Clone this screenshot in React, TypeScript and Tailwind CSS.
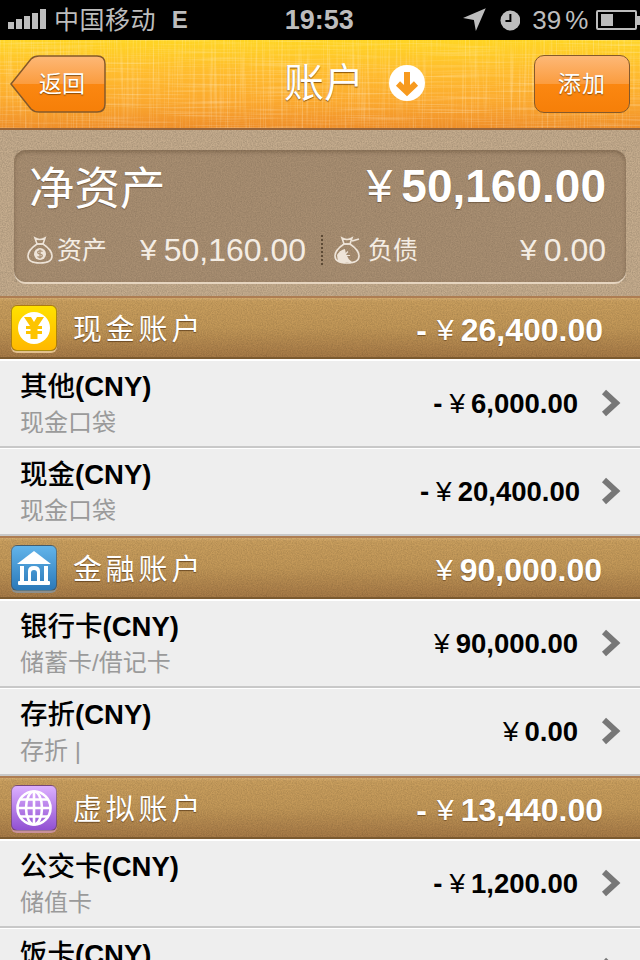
import React from "react";

function Grain({ id, opacity = 0.18 }: { id: string; opacity?: number }) {
  return (
    <svg className="absolute inset-0 h-full w-full pointer-events-none" style={{ opacity }} aria-hidden="true">
      <filter id={id} x="0" y="0" width="100%" height="100%">
        <feTurbulence type="fractalNoise" baseFrequency="0.8" numOctaves={2} seed={4} />
        <feColorMatrix type="matrix" values="0 0 0 0 0  0 0 0 0 0  0 0 0 0 0  1.6 0 0 0 -0.45" />
      </filter>
      <rect width="100%" height="100%" filter={`url(#${id})`} />
    </svg>
  );
}

function Linen() {
  return (
    <svg className="absolute inset-0 h-full w-full pointer-events-none" aria-hidden="true">
      <filter id="linenH" x="0" y="0" width="100%" height="100%">
        <feTurbulence type="fractalNoise" baseFrequency="0.012 0.55" numOctaves={2} seed={7} />
        <feColorMatrix type="matrix" values="0 0 0 0 1  0 0 0 0 0.95  0 0 0 0 0.8  2.6 0 0 0 -1.25" />
      </filter>
      <filter id="linenV" x="0" y="0" width="100%" height="100%">
        <feTurbulence type="fractalNoise" baseFrequency="0.55 0.012" numOctaves={2} seed={11} />
        <feColorMatrix type="matrix" values="0 0 0 0 1  0 0 0 0 0.95  0 0 0 0 0.8  2.6 0 0 0 -1.25" />
      </filter>
      <rect width="100%" height="100%" filter="url(#linenH)" opacity="0.28" />
      <rect width="100%" height="100%" filter="url(#linenV)" opacity="0.28" />
    </svg>
  );
}

function StatusBar() {
  return (
    <div className="flex h-10 items-center bg-black text-[#bdbdbd]">
      <div className="ml-2 flex h-[20px] w-[38px] items-end gap-[2px] pb-[1px]">
        <i className="block h-[7px] w-[6px] bg-[#bdbdbd]" />
        <i className="block h-[10px] w-[6px] bg-[#bdbdbd]" />
        <i className="block h-[13px] w-[6px] bg-[#bdbdbd]" />
        <i className="block h-[16px] w-[6px] bg-[#bdbdbd]" />
        <i className="block h-[20px] w-[6px] bg-[#bdbdbd]" />
      </div>
      <span className="ml-[8px] w-[119px] text-[25px] leading-none tracking-[0.5px]">中国移动</span>
      <span className="text-[24px] font-bold leading-none">E</span>
      <span className="ml-[97px] text-[27px] font-bold leading-none">19:53</span>
      <svg className="ml-[109px]" width="24" height="24" viewBox="0 0 24 24">
        <path d="M23 0 L13 23 L11 12 L0 10 Z" fill="#bdbdbd" />
      </svg>
      <svg className="ml-[13px]" width="21" height="21" viewBox="0 0 21 21">
        <circle cx="10.5" cy="10.5" r="10" fill="#bdbdbd" />
        <path d="M10.5 4 V11 H5.5" fill="none" stroke="#000" strokeWidth="2" />
      </svg>
      <span className="ml-[12px] text-[26px] leading-none">39<span className="ml-[4px]">%</span></span>
      <div className="ml-[8px] flex h-[20px] w-[41px] items-center rounded-[2px] border-2 border-[#bdbdbd] pl-[3px]">
        <i className="block h-[12px] w-[12px] bg-[#bdbdbd]" />
      </div>
      <i className="block h-[9px] w-[3px] bg-[#bdbdbd]" />
    </div>
  );
}

function BackButton() {
  return (
    <div className="relative flex h-[58px] w-[96px] items-center justify-end pr-[21px]">
      <svg className="absolute inset-0" width="96" height="58" viewBox="0 0 96 58">
        <defs>
          <linearGradient id="btnBack" x1="0" y1="0" x2="0" y2="1">
            <stop offset="0" stopColor="#fdb877" />
            <stop offset="0.5" stopColor="#fb9c3e" />
            <stop offset="0.5" stopColor="#fb8711" />
            <stop offset="1" stopColor="#f67f08" />
          </linearGradient>
        </defs>
        <path d="M1 29 L21 4 Q24 1 29 1 H87 Q95 1 95 9 V49 Q95 57 87 57 H29 Q24 57 21 54 Z" fill="url(#btnBack)" stroke="#85592a" strokeWidth="1.5" />
      </svg>
      <span className="relative text-[23px] leading-none text-white [text-shadow:0_1px_1px_rgba(90,50,0,0.7)]">返回</span>
    </div>
  );
}

function AddButton() {
  return (
    <div className="flex h-[58px] w-[96px] items-center justify-center rounded-[10px] border-[1.5px] border-[#85592a] bg-[linear-gradient(#fdb877_0%,#fb9c3e_50%,#fb8711_50%,#f67f08_100%)]">
      <span className="text-[23px] leading-none tracking-[1px] text-white [text-shadow:0_1px_1px_rgba(90,50,0,0.7)]">添加</span>
    </div>
  );
}

function NavBar() {
  return (
    <div className="relative h-[90px] border-b-2 border-[#986437] bg-[linear-gradient(#ffd524_0%,#ffbd2e_35%,#fba92f_70%,#ef8f2a_100%)] pl-[10px] pr-[10px]">
      <Linen />
      <div className="relative flex h-[88px] items-center justify-between">
        <BackButton />
        <div className="absolute left-[274px] top-[20px] flex items-center">
          <span className="text-[40px] leading-[46px] text-white [text-shadow:0_1px_1px_rgba(110,60,0,0.8)]">账户</span>
          <svg className="ml-[25px]" width="36" height="36" viewBox="0 0 36 36">
            <circle cx="18" cy="18" r="18" fill="#fff" />
            <path d="M18 7 V27 M9 18.5 L18 27 L27 18.5" fill="none" stroke="#f79a1e" strokeWidth="6" />
          </svg>
        </div>
        <AddButton />
      </div>
    </div>
  );
}

function BagIcon({ kind }: { kind: "in" | "out" }) {
  return (
    <svg width="26" height="28" viewBox="0 0 26 28" fill="none" stroke="#eee4d8" strokeWidth="1.6">
      <path d="M8 2 Q13 5 18 2 L16 8 H10 Z" />
      <path d="M10 8 Q1 14 1 20 Q1 27 13 27 Q25 27 25 20 Q25 14 16 8 Z" />
      {kind === "in" ? (
        <>
          <circle cx="13" cy="18" r="6" fill="#eee4d8" stroke="none" />
          <path d="M15.5 15.5 Q13 14 11 15.5 Q10 17.5 13 18 Q16 18.5 15 20.5 Q13 22 10.5 20.5 M13 13.5 V22.5" stroke="#a98f72" strokeWidth="1.2" />
        </>
      ) : (
        <>
          <path d="M18 5 L25 3" />
          <path d="M3 19 L4 26 H18 Q12 22 11 13 Q6 14 3 19 Z" fill="#eee4d8" stroke="none" />
          <path d="M10 14 V25 M5 19.5 H16 M6 15.5 L14 23.5 M14 15.5 L6 23.5" strokeWidth="1.2" />
        </>
      )}
    </svg>
  );
}

function Summary() {
  return (
    <div className="relative h-[166px] bg-[#c6ad8e] px-[14px] pt-[20px]">
      <Grain id="g1" opacity={0.16} />
      <div className="relative h-[132px] rounded-[12px] bg-[#a98f72] shadow-[inset_0_2px_4px_rgba(70,50,30,0.35),0_2px_0_#e6d5c0]">
        <Grain id="g2" opacity={0.12} />
        <div className="relative flex h-[78px] items-center justify-between pl-[15px] pr-[20px]">
          <span className="mt-[2px] text-[45.5px] leading-none text-white [text-shadow:0_1px_1px_rgba(70,50,30,0.5)]">净资产</span>
          <span className="-mt-[6px] flex items-center text-[46px] font-bold leading-none text-white [text-shadow:0_1px_1px_rgba(70,50,30,0.5)]">
            <span className="mr-[9px] font-normal">¥</span>50,160.00
          </span>
        </div>
        <div className="relative flex h-[44px] items-center text-[#f4ede4]">
          <div className="ml-[13px] flex w-[279px] items-center">
            <BagIcon kind="in" />
            <span className="ml-[4px] text-[25px] leading-none">资产</span>
            <span className="ml-auto flex items-center text-[32px] leading-none">
              <span className="mr-[7px] text-[30px]">¥</span>50,160.00
            </span>
          </div>
          <div className="ml-[15px] h-[30px] w-[2px] border-l-2 border-dotted border-[#5d4a35]" />
          <div className="ml-[11px] flex w-[272px] items-center">
            <BagIcon kind="out" />
            <span className="ml-[8px] text-[25px] leading-none">负债</span>
            <span className="ml-auto flex items-center text-[32px] leading-none">
              <span className="mr-[7px] text-[30px]">¥</span>0.00
            </span>
          </div>
        </div>
      </div>
    </div>
  );
}

function CoinIcon() {
  return (
    <svg width="32" height="32" viewBox="0 0 32 32">
      <circle cx="16" cy="16" r="16" fill="#fff" />
      <path d="M6 5 H13 L16 10 L19 5 H26 L20 14 H24 V17 H19.5 V19 H24 V22 H19.5 V27 H12.5 V22 H8 V19 H12.5 V17 H8 V14 H12 Z" fill="#fdc400" />
    </svg>
  );
}

function BankIcon() {
  return (
    <svg width="36" height="36" viewBox="0 0 36 36" fill="#fff">
      <path d="M18 1 L35 14 H1 Z" />
      <rect x="4" y="16" width="4" height="15" />
      <rect x="28" y="16" width="4" height="15" />
      <path d="M12 31 V21 Q12 16 18 16 Q24 16 24 21 V31 H21 V23 Q21 20 18 20 Q15 20 15 23 V31 Z" />
      <rect x="2" y="31" width="32" height="4" rx="1" />
    </svg>
  );
}

function GlobeIcon() {
  return (
    <svg width="36" height="36" viewBox="0 0 36 36" fill="none" stroke="#fff" strokeWidth="2.6">
      <circle cx="18" cy="18" r="16.5" />
      <ellipse cx="18" cy="18" rx="8" ry="16.5" />
      <path d="M18 1.5 V34.5 M1.5 18 H34.5 M4 9.5 H32 M4 26.5 H32" />
    </svg>
  );
}

function SectionHeader({ title, amount, negative, tile, rim, icon, right }: { title: string; amount: string; negative?: boolean; tile: string; rim: string; icon: React.ReactNode; right: string }) {
  return (
    <div className="relative flex h-[64px] items-center border-t-2 border-b-[3px] border-t-[#ae7d52] border-b-[#7b5a30] bg-[linear-gradient(#d9b072_0,#cba05f_3px,#c39858_50%,#a87b47_100%)]">
      <Grain id={`s${title}`} opacity={0.14} />
      <div className={`relative ml-[11px] flex h-[46px] w-[46px] items-center justify-center rounded-[6px] border border-[rgba(90,60,30,0.5)] ${tile} ${rim}`}>
        {icon}
      </div>
      <span className="relative ml-[16px] mt-[5px] text-[29px] leading-none tracking-[3.8px] text-white [text-shadow:0_1px_1px_rgba(80,50,20,0.7)]">{title}</span>
      <span className={`relative ml-auto mt-[4px] flex items-center text-[32px] font-bold leading-none text-white [text-shadow:0_1px_1px_rgba(80,50,20,0.6)] ${right}`}>
        {negative && <span className="mr-[10px]">-</span>}
        <span className="mr-[7px] text-[30px] font-normal">¥</span>
        {amount}
      </span>
      <div className="absolute bottom-[-3px] left-0 right-0 h-[1.5px] bg-white" />
    </div>
  );
}

function Row({ title, sub, amount, negative, right = "mr-[62px]" }: { title: string; sub: string; amount: string; negative?: boolean; right?: string }) {
  return (
    <div className="flex h-[88px] items-start border-t-[1.5px] border-b-2 border-t-white border-b-[#c8c8c8] bg-[#eeeeee]">
      <div className="pl-[20px] pt-[9px]">
        <div className="text-[27.5px] leading-[34px] text-black">
          <span className="font-medium">{title}</span>
          <span className="font-bold">(CNY)</span>
        </div>
        <div className="mt-[2px] text-[24px] leading-[34px] text-[#9a9a9a]">{sub}</div>
      </div>
      <div className={`ml-auto mt-[26px] flex items-center text-[27.5px] font-bold leading-[34px] text-black ${right}`}>
        {negative && <span className="mr-[7px]">-</span>}
        <span className="mr-[6px] text-[28px] font-normal">¥</span>
        {amount}
      </div>
      <svg className="absolute left-[600px] mt-[28px]" width="21" height="28" viewBox="0 0 21 28">
        <path d="M4 3 L16 14 L4 25" fill="none" stroke="#777" strokeWidth="6" />
      </svg>
    </div>
  );
}

export default function App() {
  return (
    <div className="relative h-[960px] w-[640px] overflow-hidden bg-[#eeeeee] [font-family:'Liberation_Sans','Noto_Sans_CJK_SC',sans-serif]">
      <StatusBar />
      <NavBar />
      <Summary />
      <SectionHeader title="现金账户" amount="26,400.00" negative tile="bg-[linear-gradient(#ffe100,#ffb800)]" rim="shadow-[0_2px_0_#e2c08e]" icon={<CoinIcon />} right="mr-[37px]" />
      <Row title="其他" sub="现金口袋" amount="6,000.00" negative />
      <Row title="现金" sub="现金口袋" amount="20,400.00" negative right="mr-[60px]" />
      <SectionHeader title="金融账户" amount="90,000.00" tile="bg-[linear-gradient(#62b4ea,#2b79b9)]" rim="shadow-[0_2px_0_#8d8f8d]" icon={<BankIcon />} right="mr-[38px]" />
      <Row title="银行卡" sub="储蓄卡/借记卡" amount="90,000.00" />
      <Row title="存折" sub="存折 |" amount="0.00" />
      <SectionHeader title="虚拟账户" amount="13,440.00" negative tile="bg-[linear-gradient(#dcb0ff,#9150d2)]" rim="shadow-[0_2px_0_#c8909a]" icon={<GlobeIcon />} right="mr-[37px]" />
      <Row title="公交卡" sub="储值卡" amount="1,200.00" negative />
      <Row title="饭卡" sub="储值卡" amount="0.00" />
    </div>
  );
}
